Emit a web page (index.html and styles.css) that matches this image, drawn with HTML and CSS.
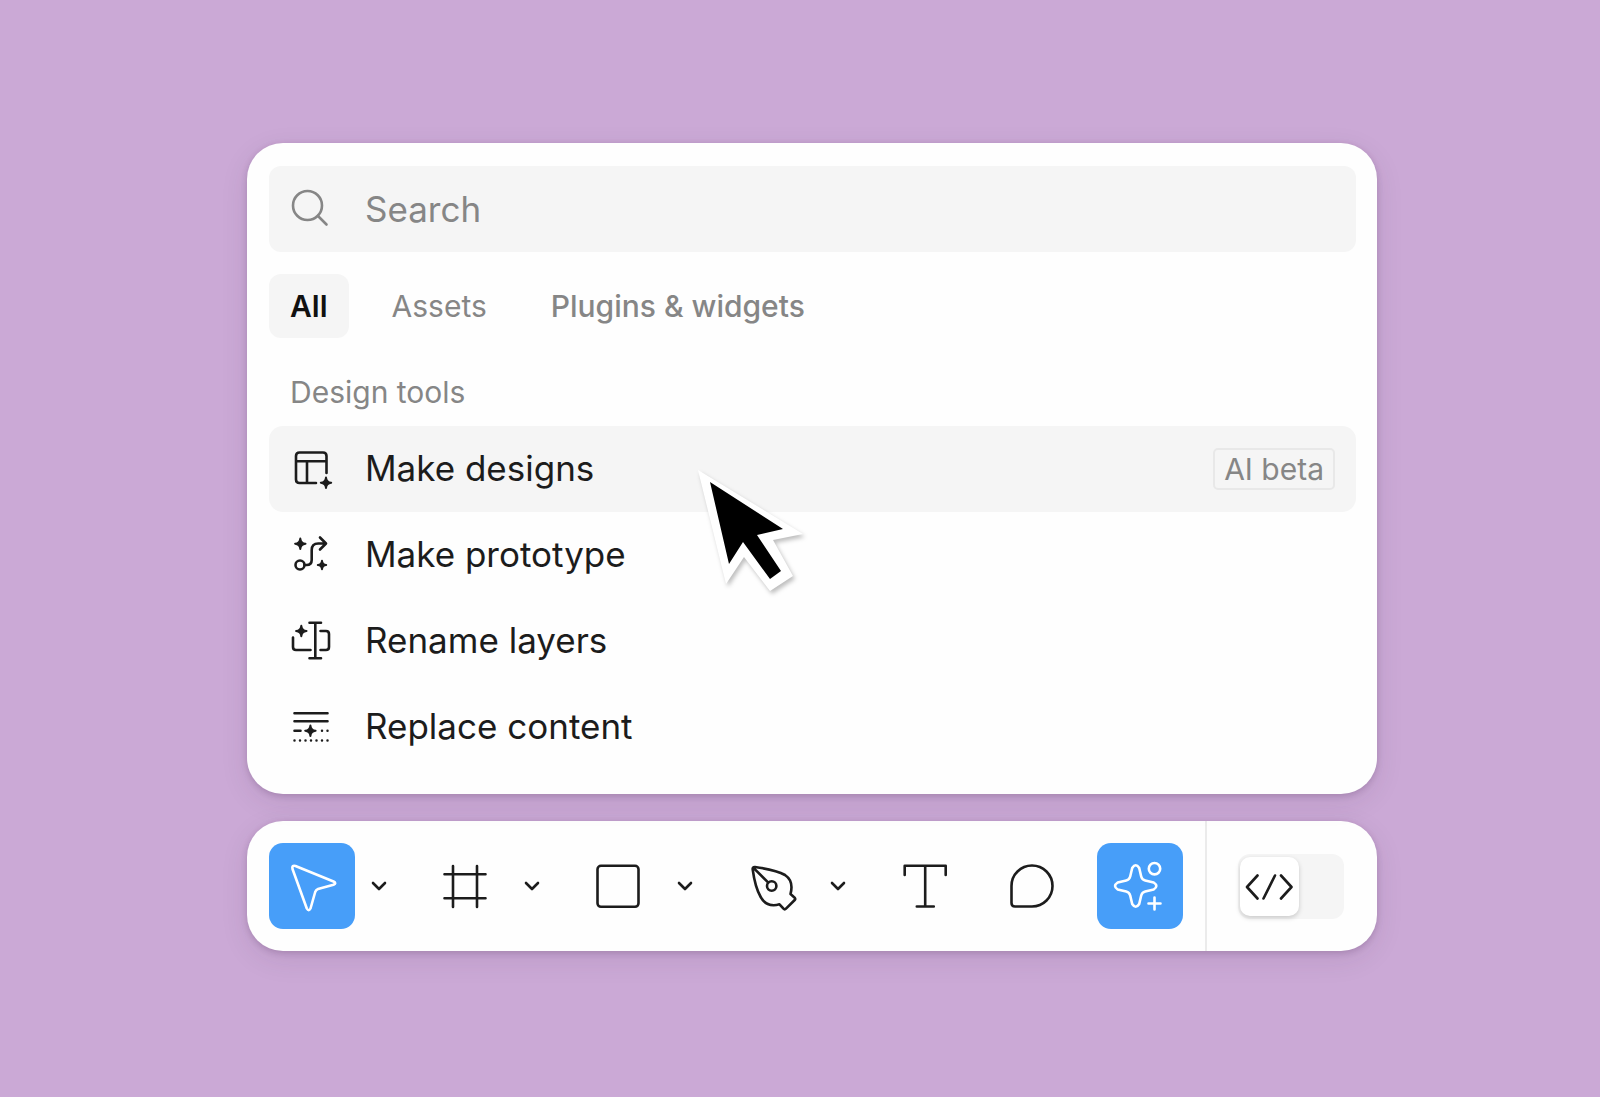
FILE: index.html
```html
<!DOCTYPE html>
<html lang="en">
<head>
<meta charset="utf-8">
<meta name="viewport" content="width=device-width, initial-scale=1">
<title>Actions</title>
<link rel="stylesheet" href="styles.css">
</head>
<body>
<main class="stage">
  <section class="panel" aria-label="Actions">
    <label class="search">
      <svg class="icon" viewBox="0 0 48 48" aria-hidden="true"><circle cx="20.500" cy="20.500" r="14.500"/><path d="M31 31 39.500 39.500"/></svg>
      <input class="search-input" type="search" placeholder="Search" aria-label="Search">
    </label>
    <nav class="tabs" aria-label="Filter">
      <button class="tab tab-active" type="button">All</button>
      <button class="tab" type="button">Assets</button>
      <button class="tab tab-wide" type="button">Plugins &amp; widgets</button>
    </nav>
    <h2 class="heading">Design tools</h2>
    <div class="actions">
      <button class="action action-active" type="button">
        <svg class="icon" viewBox="0 0 48 48" aria-hidden="true"><path d="M39.500 28V11q0-3.500-3.500-3.500H12.500Q9 7.500 9 11v23.500q0 3.500 3.500 3.500H29M9 16.300h30.500M20 16.300V38"/><path class="solid" d="M39 32.500q.4 4.800 5.200 5.200-4.800.4-5.200 5.200-.4-4.800-5.200-5.200 4.800-.4 5.200-5.200z"/></svg>
        <span class="action-name">Make designs</span>
        <span class="badge">AI beta</span>
      </button>
      <button class="action" type="button">
        <svg class="icon" viewBox="0 0 48 48" aria-hidden="true"><circle cx="13" cy="34" r="4.500"/><path d="M17.500 34h2q5.200 0 5.200-5V19q0-6.500 6.500-6.500H38.500M33 6.500l6 6-6 6"/><path class="solid" d="M13.300 7.500q.4 4.800 5.200 5.200-4.800.4-5.200 5.200-.4-4.800-5.200-5.200 4.800-.4 5.200-5.200zM35 29.800q.2 4 4.200 4.200-4 .2-4.200 4.200-.2-4-4.200-4.200 4-.2 4.200-4.200z"/></svg>
        <span class="action-name">Make prototype</span>
      </button>
      <button class="action" type="button">
        <svg class="icon" viewBox="0 0 48 48" aria-hidden="true"><path d="M22.500 5.800h11.500M28.300 5.800v35.500M22.500 41.300h11.500M6 20.500V30q0 3 3 3h14.500M33.500 14H39q3 0 3 3v13q0 3-3 3h-5.500"/><path class="solid" d="M14.300 8.800q.4 4.800 5.200 5.200-4.800.4-5.200 5.200-.4-4.800-5.200-5.200 4.800-.4 5.200-5.200z"/></svg>
        <span class="action-name">Rename layers</span>
      </button>
      <button class="action" type="button">
        <svg class="icon" viewBox="0 0 48 48" aria-hidden="true"><path d="M7.500 10.300h33M7.500 18.300h33M7.500 27.700h6"/><path class="dots" d="M35 27.700h6M7.500 37.500h34"/><path class="solid" d="M23.400 22.500q.4 4.800 5.200 5.200-4.800.4-5.200 5.200-.4-4.800-5.200-5.200 4.800-.4 5.200-5.200z"/></svg>
        <span class="action-name">Replace content</span>
      </button>
    </div>
    <svg class="pointer" viewBox="0 0 130 150" aria-hidden="true"><path fill="#fff" d="M8 10 113 74 83 80 103 116 80 131 54 97 36 124z"/><path fill="#000" d="M20 22 93 69 67 75 91 111 80 119 53 82 39 104z"/></svg>
  </section>

  <section class="toolbar" aria-label="Tools">
    <div class="tool-group">
      <button class="tool tool-active" type="button" aria-label="Move"><svg class="glyph" viewBox="0 0 86 86"><path d="M26.500 23 64.500 38.500Q68 40.300 64.500 41.800L49 46Q47 46.700 46.200 49L41.500 65.500Q39.700 69 37.800 65.500L23.500 26Q22.500 22 26.500 23z"/></svg></button>
      <button class="more" type="button" aria-label="More move tools"><svg class="chevron" viewBox="0 0 16 10"><path d="M2 2l6 6 6-6"/></svg></button>
    </div>
    <div class="tool-group">
      <button class="tool" type="button" aria-label="Frame"><svg class="glyph" viewBox="0 0 86 86"><path d="M31 23v41M55 23v41M22.500 31.300h41M22.500 55.200h41"/></svg></button>
      <button class="more" type="button" aria-label="More frame tools"><svg class="chevron" viewBox="0 0 16 10"><path d="M2 2l6 6 6-6"/></svg></button>
    </div>
    <div class="tool-group">
      <button class="tool" type="button" aria-label="Rectangle"><svg class="glyph" viewBox="0 0 86 86"><rect x="22.500" y="22.800" width="41" height="41" rx="3.500"/></svg></button>
      <button class="more" type="button" aria-label="More shape tools"><svg class="chevron" viewBox="0 0 16 10"><path d="M2 2l6 6 6-6"/></svg></button>
    </div>
    <div class="tool-group">
      <button class="tool" type="button" aria-label="Pen"><svg class="glyph" viewBox="0 0 86 86"><path d="M27 24C38 25.500 50 28 57 32Q66 38 62.500 51L66.700 54.700Q67.700 56 66.700 57L58 65.700Q56.700 67 55.500 65.700L51.500 61.300Q39 65 32.700 54C28 46 26 36 24.700 26.500Q24.300 23.800 27 24zM25.500 24.800 40.300 39.700"/><circle cx="43.700" cy="43" r="4.700"/></svg></button>
      <button class="more" type="button" aria-label="More drawing tools"><svg class="chevron" viewBox="0 0 16 10"><path d="M2 2l6 6 6-6"/></svg></button>
    </div>
    <button class="tool" type="button" aria-label="Text"><svg class="glyph" viewBox="0 0 86 86"><path d="M23.700 32v-9.200h41V32M44.200 22.800v40.700M35.800 63.500h17"/></svg></button>
    <button class="tool" type="button" aria-label="Comment"><svg class="glyph" viewBox="0 0 86 86"><path d="M22.500 43A20.500 20.500 0 1 1 43 63.500H26Q22.500 63.500 22.500 60z"/></svg></button>
    <button class="tool tool-active" type="button" aria-label="Actions"><svg class="glyph" viewBox="0 0 86 86"><path d="M35.200 25Q38.700 19.500 42.200 25L44.200 33.500Q45 36.700 48.200 37.500L56.700 39.500Q62 43 56.700 46.500L48.200 48.500Q45 49.300 44.200 52.500L42.200 61Q38.700 66.500 35.200 61L33.200 52.500Q32.400 49.300 29.200 48.500L20.700 46.500Q15.400 43 20.700 39.500L29.200 37.500Q32.400 36.700 33.200 33.500z"/><circle cx="57.500" cy="25.700" r="5.700"/><path d="M57.500 54.500v12M51.500 60.500h12"/></svg></button>
    <div class="mode">
      <label class="switch">
        <input class="switch-input" type="checkbox" role="switch" aria-label="Dev Mode">
        <span class="thumb"><svg class="code" viewBox="0 0 59 59" aria-hidden="true"><path d="M17.500 18.500 7 30l10.500 11.500M35 18.500 23.500 41.500M41 18.500 51.500 30 41 41.500"/></svg></span>
      </label>
    </div>
  </section>
</main>
</body>
</html>
```
FILE: styles.css
```css
* {
  box-sizing: border-box;
}

body {
  margin: 0;
  min-height: 100vh;
  background: #cba9d6;
  color: #1c1c1c;
  font-family: Inter, "Liberation Sans", sans-serif;
}

button,
input {
  margin: 0;
  padding: 0;
  border: 0;
  background: none;
  color: inherit;
  font: inherit;
}

svg {
  display: block;
  fill: none;
  stroke: currentColor;
  stroke-linecap: round;
  stroke-linejoin: round;
}

.stage {
  display: flex;
  flex-direction: column;
  gap: 27px;
  padding: 143px 223px 48px 247px;
}

.panel,
.toolbar {
  background: #fefefe;
  border-radius: 36px;
  box-shadow: 0 2px 6px rgba(60, 30, 70, 0.2), 0 8px 28px rgba(60, 30, 70, 0.1);
}

.panel {
  position: relative;
  padding: 23px 21px 24px 22px;
}

.search {
  display: flex;
  align-items: center;
  gap: 30px;
  height: 86px;
  padding: 0 18px;
  border-radius: 12px;
  background: #f5f5f5;
  color: #868686;
}

.search-input {
  flex: 1;
  min-width: 0;
  font-size: 35px;
  line-height: 44px;
  appearance: none;
  outline: 0;
}

.search-input::placeholder {
  color: #868686;
  opacity: 1;
}

.icon {
  flex: none;
  width: 48px;
  height: 48px;
  stroke-width: 2.6;
}

.solid {
  fill: currentColor;
  stroke-width: 2;
}

.dots {
  stroke-width: 2.5;
  stroke-dasharray: 0 5.5;
}

.tabs {
  display: flex;
  gap: 22px;
  margin-top: 22px;
}

.tab {
  height: 64px;
  padding: 0 21px;
  border-radius: 12px;
  color: #868686;
  font-size: 30px;
  line-height: 40px;
  white-space: nowrap;
}

.tab-active {
  background: #f5f5f5;
  color: #111;
  font-weight: 600;
}

.tab-wide {
  font-weight: 500;
}

.heading {
  margin: 0;
  padding: 34px 21px 14px;
  color: #868686;
  font-size: 30px;
  font-weight: 400;
  line-height: 40px;
}

.actions {
  display: flex;
  flex-direction: column;
}

.action {
  display: flex;
  align-items: center;
  gap: 30px;
  height: 86px;
  padding: 0 21px 0 18px;
  border-radius: 14px;
  font-size: 35px;
  line-height: 44px;
  text-align: left;
}

.action-active {
  background: #f5f5f5;
}

.action-name {
  padding-bottom: 2px;
}

.badge {
  margin-left: auto;
  padding: 0 9px;
  border: 2px solid #e8e8e8;
  border-radius: 5px;
  color: #868686;
  font-size: 30px;
  line-height: 38px;
}

.pointer {
  position: absolute;
  top: 317px;
  left: 443px;
  width: 130px;
  height: 150px;
  stroke: none;
  filter: drop-shadow(2px 3px 2px rgba(0, 0, 0, 0.25));
  pointer-events: none;
}

.toolbar {
  display: flex;
  align-items: center;
  gap: 22px;
  height: 130px;
  padding-left: 22px;
}

.tool-group {
  display: flex;
}

.tool {
  width: 86px;
  height: 86px;
  border-radius: 14px;
}

.tool-active {
  background: #479ef9;
  color: #fff;
}

.glyph {
  width: 86px;
  height: 86px;
  stroke-width: 2.6;
}

.more {
  display: flex;
  align-items: center;
  justify-content: center;
  width: 45px;
  padding-left: 3px;
}

.chevron {
  width: 16px;
  height: 10px;
  stroke-width: 2.6;
}

.mode {
  display: flex;
  flex: 1;
  align-items: center;
  align-self: stretch;
  padding-left: 31px;
  border-left: 2px solid #ebebeb;
}

.switch {
  display: grid;
  align-items: center;
}

.switch-input,
.thumb {
  grid-area: 1 / 1;
}

.switch-input {
  width: 106px;
  height: 65px;
  border-radius: 12px;
  background: #f5f5f5;
  appearance: none;
}

.thumb {
  width: 59px;
  height: 59px;
  margin-left: 2px;
  border-radius: 10px;
  background: #fff;
  box-shadow: 0 2px 5px rgba(0, 0, 0, 0.18);
}

.code {
  stroke-width: 2.6;
}
```
